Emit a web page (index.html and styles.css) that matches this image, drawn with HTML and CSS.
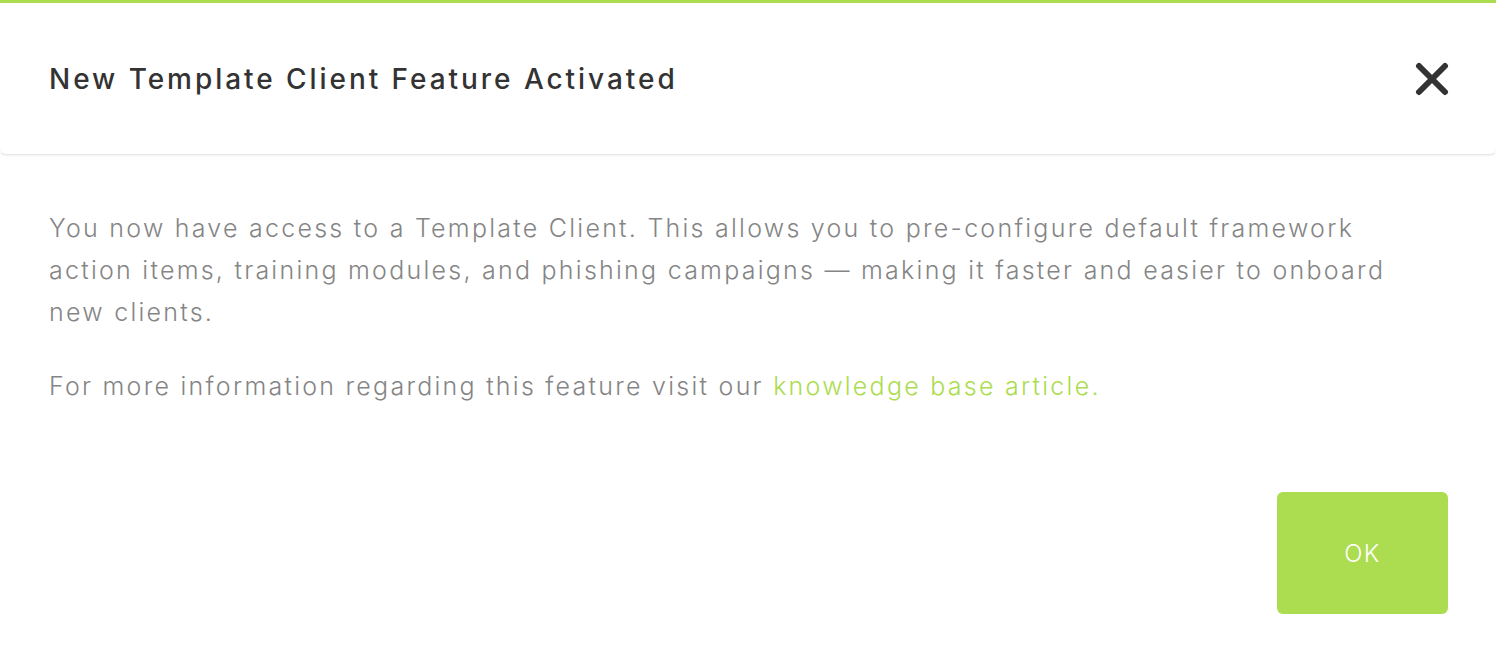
FILE: index.html
```html
<!DOCTYPE html>
<html lang="en">
<head>
<meta charset="utf-8">
<title>New Template Client Feature Activated</title>
<link rel="stylesheet" href="styles.css">
</head>
<body>
<div class="modal">
  <header class="modal-header">
    <h1 class="modal-title">New Template Client Feature Activated</h1>
    <button class="close-btn" aria-label="Close">
      <svg width="34" height="34" viewBox="0 0 34 34"><path d="M4 4 L30 30 M30 4 L4 30" stroke="#333" stroke-width="6" stroke-linecap="round" fill="none"/></svg>
    </button>
  </header>
  <div class="modal-body">
    <p class="text">You now have access to a Template Client. This allows you to pre-configure default framework action items, training modules, and phishing campaigns — making it faster and easier to onboard new clients.</p>
    <p class="text">For more information regarding this feature visit our <a class="link" href="#">knowledge base article.</a></p>
  </div>
  <div class="modal-footer">
    <button class="ok-btn">OK</button>
  </div>
</div>
</body>
</html>
```
FILE: styles.css
```css
html, body {
  margin: 0;
  padding: 0;
  background: #fff;
}
body {
  font-family: "Inter", "Open Sans", sans-serif;
  width: 1496px;
  height: 648px;
  overflow: hidden;
}
.modal {
  border-top: 3px solid #acdc50;
  display: flex;
  flex-direction: column;
}
.modal-header {
  height: 152px;
  box-sizing: border-box;
  padding: 1px 47px 0 49px;
  display: flex;
  align-items: center;
  justify-content: space-between;
  border-bottom: 1px solid #e6e6e6;
  border-radius: 0 0 6px 6px;
  box-shadow: 0 1px 2px rgba(0,0,0,0.06);
}
.modal-title {
  margin: 0;
  font-size: 28px;
  font-weight: 500;
  color: #333;
  letter-spacing: 2.95px;
}
.close-btn {
  background: none;
  border: 0;
  padding: 0;
  width: 34px;
  height: 34px;
  display: flex;
  cursor: pointer;
}
.modal-body {
  padding: 52px 48px 0 49px;
}
.text {
  max-width: 1372px;
  margin: 0 0 32px;
  font-size: 25px;
  line-height: 42px;
  font-weight: 300;
  color: #858585;
  letter-spacing: 2.25px;
}
.link {
  color: #acdc50;
  text-decoration: none;
}
.modal-footer {
  display: flex;
  justify-content: flex-end;
  padding: 53px 48px 0;
}
.ok-btn {
  width: 171px;
  height: 122px;
  border: 0;
  border-radius: 6px;
  background: #acdc50;
  color: #fff;
  font-family: inherit;
  font-size: 24px;
  font-weight: 300;
  letter-spacing: 1.5px;
  cursor: pointer;
}
```
